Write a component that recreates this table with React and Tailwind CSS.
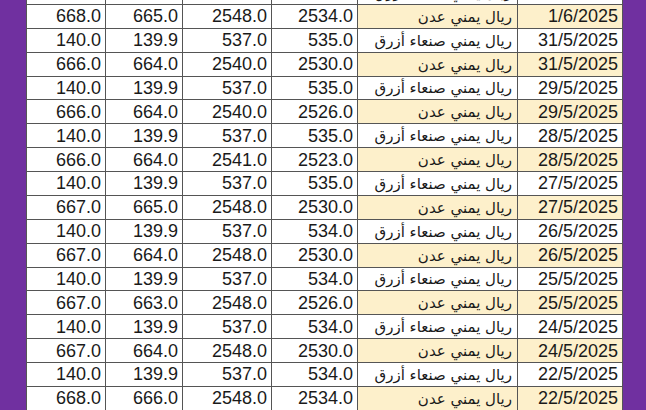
const SANAA = 'ريال يمني صنعاء أزرق';
const ADEN = 'ريال يمني عدن';

const rows = [
  ['140.0', '139.9', '537.0', '535.0', SANAA, '1/6/2025'],
  ['668.0', '665.0', '2548.0', '2534.0', ADEN, '1/6/2025'],
  ['140.0', '139.9', '537.0', '535.0', SANAA, '31/5/2025'],
  ['666.0', '664.0', '2540.0', '2530.0', ADEN, '31/5/2025'],
  ['140.0', '139.9', '537.0', '535.0', SANAA, '29/5/2025'],
  ['666.0', '664.0', '2540.0', '2526.0', ADEN, '29/5/2025'],
  ['140.0', '139.9', '537.0', '535.0', SANAA, '28/5/2025'],
  ['666.0', '664.0', '2541.0', '2523.0', ADEN, '28/5/2025'],
  ['140.0', '139.9', '537.0', '535.0', SANAA, '27/5/2025'],
  ['667.0', '665.0', '2548.0', '2530.0', ADEN, '27/5/2025'],
  ['140.0', '139.9', '537.0', '534.0', SANAA, '26/5/2025'],
  ['667.0', '664.0', '2548.0', '2530.0', ADEN, '26/5/2025'],
  ['140.0', '139.9', '537.0', '534.0', SANAA, '25/5/2025'],
  ['667.0', '663.0', '2548.0', '2526.0', ADEN, '25/5/2025'],
  ['140.0', '139.9', '537.0', '534.0', SANAA, '24/5/2025'],
  ['667.0', '664.0', '2548.0', '2530.0', ADEN, '24/5/2025'],
  ['140.0', '139.9', '537.0', '534.0', SANAA, '22/5/2025'],
  ['668.0', '666.0', '2548.0', '2534.0', ADEN, '22/5/2025'],
];

const num = "border border-[#555] h-[23.875px] p-0 pr-[4px] text-right text-[18px] leading-none text-[#1a1a1a] bg-white";

export default function App() {
  return (
    <div className="w-[646px] h-[410px] overflow-hidden bg-[#7030a0] pl-[26px]" style={{ fontFamily: '"Liberation Sans", Arial, sans-serif' }}>
      <table className="-mt-[20px] w-[596px] table-fixed border-collapse">
        <colgroup>
          <col className="w-[79px]" />
          <col className="w-[77px]" />
          <col className="w-[89px]" />
          <col className="w-[86px]" />
          <col className="w-[160px]" />
          <col className="w-[105px]" />
        </colgroup>
        <tbody>
          {rows.map((r, i) => {
            const aden = r[4] === ADEN;
            const bg = aden ? 'bg-[#fdf0cb]' : 'bg-white';
            return (
              <tr key={i}>
                <td className={num}>{r[0]}</td>
                <td className={num}>{r[1]}</td>
                <td className={num}>{r[2]}</td>
                <td className={num}>{r[3]}</td>
                <td
                  dir="rtl"
                  className={`border border-[#555] h-[23.875px] p-0 pr-[5px] pt-[2px] text-right text-[15px] leading-none whitespace-nowrap text-[#1a1a1a] ${bg}`}
                  style={{ fontFamily: '"DejaVu Sans", "Noto Sans", sans-serif' }}
                >
                  {r[4]}
                </td>
                <td className={`border border-[#555] h-[23.875px] p-0 pr-[4px] text-right text-[18px] leading-none text-[#1a1a1a] ${bg}`}>
                  {r[5]}
                </td>
              </tr>
            );
          })}
        </tbody>
      </table>
    </div>
  );
}
